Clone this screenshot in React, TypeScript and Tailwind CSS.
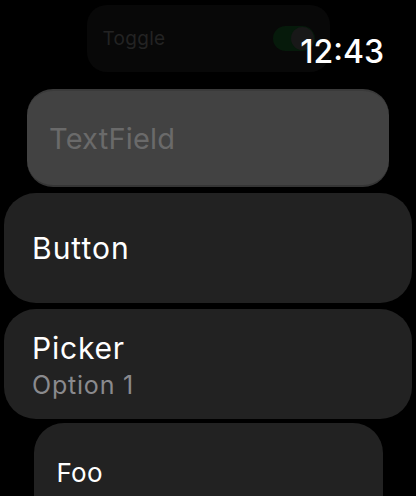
import React from "react";

export default function App() {
  return (
    <div
      className="relative w-[416px] h-[496px] overflow-hidden bg-black"
      style={{ fontFamily: "Inter, 'Noto Sans', sans-serif" }}
    >
      <div className="flex flex-col items-center pt-[5px]">
        {/* Toggle (faded, scrolled under status) */}
        <div className="w-[243px] h-[67px] rounded-[20px] bg-[#080808] flex items-center justify-between pl-[16px] pr-[15px]">
          <span className="text-[19px] leading-none text-[#232323] tracking-[0.3px]">Toggle</span>
          <div className="relative w-[42px] h-[25px] rounded-full bg-[#061a0b]">
            <div className="absolute right-[1px] top-[1px] w-[23px] h-[23px] rounded-full bg-[#181818]" />
          </div>
        </div>

        {/* TextField */}
        <div className="mt-[17px] w-[362px] h-[98px] rounded-[26px] bg-[#424242] border-t-2 border-b-2 border-t-[#3a3a3a] border-b-[#353535] flex items-center pl-[22px]">
          <span className="text-[29px] leading-none text-[#6a6a6a] tracking-[0.2px]">TextField</span>
        </div>

        {/* Button */}
        <div className="mt-[6px] w-[408px] h-[110px] rounded-[32px] bg-[#222222] flex items-center pl-[28px]">
          <span className="text-[30px] leading-none text-white tracking-[1px]">Button</span>
        </div>

        {/* Picker */}
        <div className="mt-[6px] w-[408px] h-[110px] rounded-[32px] bg-[#222222] flex flex-col justify-center pl-[28px] gap-[10px] pt-[2px]">
          <span className="text-[30px] leading-none text-white tracking-[0.8px]">Picker</span>
          <span className="text-[25px] leading-none text-[#8a8a8e] tracking-[0.8px]">Option 1</span>
        </div>

        {/* Foo */}
        <div className="mt-[4px] w-[349px] h-[110px] rounded-[30px] bg-[#222222] flex items-start pl-[23px] pt-[37px]">
          <span className="text-[26px] leading-none text-white tracking-[0.3px]">Foo</span>
        </div>
      </div>

      {/* Time */}
      <div className="absolute top-[36px] right-[32px] text-[32px] leading-none font-medium text-white">
        12:43
      </div>
    </div>
  );
}
